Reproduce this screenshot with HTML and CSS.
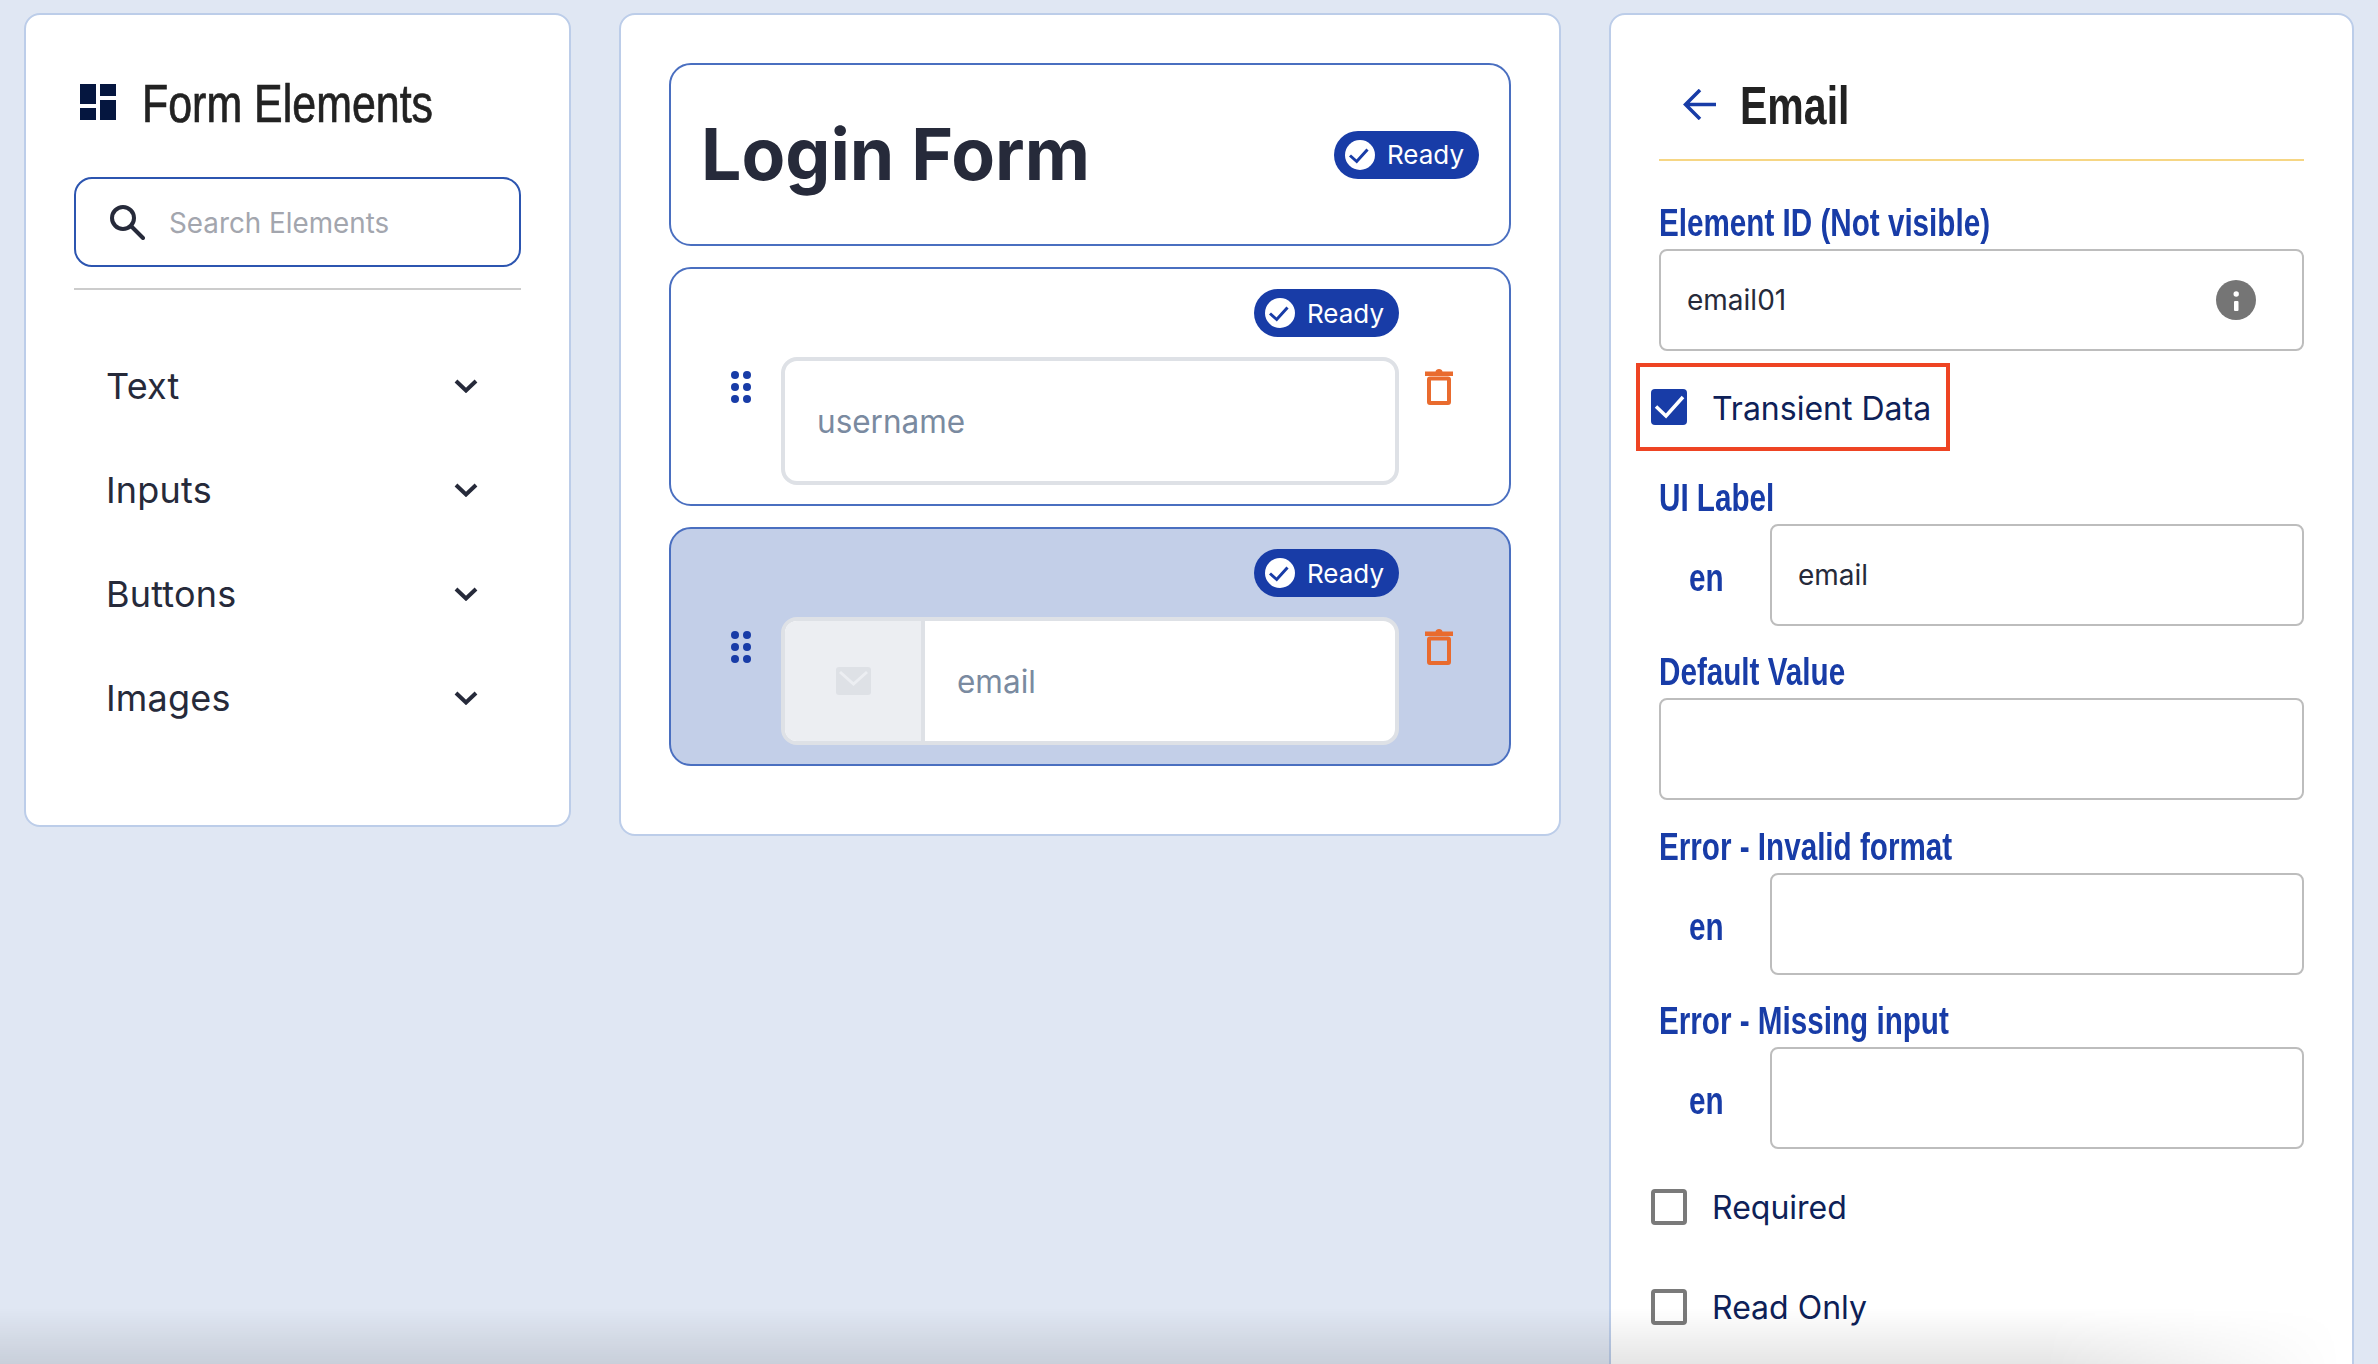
FILE: index.html
```html
<!DOCTYPE html>
<html lang="en">
<head>
<meta charset="utf-8">
<title>Login Form</title>
<link rel="stylesheet" href="styles.css">
</head>
<body>
<main class="page">
  <aside class="panel panel-left">
    <header class="elements-head">
      <svg class="elements-icon" viewBox="0 0 36 36"><path d="M0 0h16v20H0zM0 24h16v12H0zM20 0h16v12H20zM20 16h16v20H20z"/></svg>
      <h2 class="elements-title">Form Elements</h2>
    </header>
    <div class="search">
      <svg class="search-icon" viewBox="0 0 35 35"><circle cx="13" cy="13" r="11"/><path d="M21 21L33 33"/></svg>
      <span class="search-text">Search Elements</span>
    </div>
    <hr class="search-rule">
    <ul class="groups">
      <li class="group"><span>Text</span><svg class="chevron" viewBox="0 0 24 14"><path d="M2 2L12 11.5L22 2"/></svg></li>
      <li class="group"><span>Inputs</span><svg class="chevron" viewBox="0 0 24 14"><path d="M2 2L12 11.5L22 2"/></svg></li>
      <li class="group"><span>Buttons</span><svg class="chevron" viewBox="0 0 24 14"><path d="M2 2L12 11.5L22 2"/></svg></li>
      <li class="group"><span>Images</span><svg class="chevron" viewBox="0 0 24 14"><path d="M2 2L12 11.5L22 2"/></svg></li>
    </ul>
  </aside>

  <section class="panel panel-mid">
    <header class="card form-head">
      <h1 class="form-title">Login Form</h1>
      <span class="badge"><svg class="badge-check" viewBox="0 0 30 30"><circle cx="15" cy="15" r="15"/><path d="M5 15.5L11.7 21.5L22.5 9.5"/></svg>Ready</span>
    </header>

    <article class="card item">
      <span class="badge item-badge"><svg class="badge-check" viewBox="0 0 30 30"><circle cx="15" cy="15" r="15"/><path d="M5 15.5L11.7 21.5L22.5 9.5"/></svg>Ready</span>
      <svg class="handle" viewBox="0 0 20 32"><circle cx="4" cy="4" r="4"/><circle cx="16" cy="4" r="4"/><circle cx="4" cy="16" r="4"/><circle cx="16" cy="16" r="4"/><circle cx="4" cy="28" r="4"/><circle cx="16" cy="28" r="4"/></svg>
      <div class="preview"><span class="preview-text">username</span></div>
      <svg class="trash" viewBox="0 0 28 36"><path class="trash-fill" d="M0 2.500h10.500Q11 0 14 0t3.500 2.500H28V7H0z"/><rect class="trash-body" x="4" y="9.500" width="20" height="24.500" rx="1"/></svg>
    </article>

    <article class="card item item-active">
      <span class="badge item-badge"><svg class="badge-check" viewBox="0 0 30 30"><circle cx="15" cy="15" r="15"/><path d="M5 15.5L11.7 21.5L22.5 9.500"/></svg>Ready</span>
      <svg class="handle" viewBox="0 0 20 32"><circle cx="4" cy="4" r="4"/><circle cx="16" cy="4" r="4"/><circle cx="4" cy="16" r="4"/><circle cx="16" cy="16" r="4"/><circle cx="4" cy="28" r="4"/><circle cx="16" cy="28" r="4"/></svg>
      <div class="preview">
        <span class="addon"><svg class="mail" viewBox="0 0 35 28"><rect width="35" height="28" rx="3"/><path d="M4 5L17.500 17L31 5"/></svg></span>
        <span class="preview-text">email</span>
      </div>
      <svg class="trash" viewBox="0 0 28 36"><path class="trash-fill" d="M0 2.500h10.500Q11 0 14 0t3.500 2.500H28V7H0z"/><rect class="trash-body" x="4" y="9.500" width="20" height="24.500" rx="1"/></svg>
    </article>
  </section>

  <aside class="panel panel-right">
    <header class="detail-head">
      <svg class="back" viewBox="0 0 33 31"><path d="M33 15.500H3M17 1L2.500 15.500L17 30"/></svg>
      <h2 class="detail-title">Email</h2>
    </header>

    <div class="field field-first">
      <label class="field-label">Element ID (Not visible)</label>
      <div class="box box-value"><span>email01</span>
        <svg class="info" viewBox="0 0 40 40"><circle cx="20" cy="20" r="20"/><rect x="18" y="21" width="4.500" height="10" rx="1"/><circle cx="20.200" cy="14" r="2.700"/></svg>
      </div>
    </div>

    <div class="check check-marked">
      <svg class="tick" viewBox="0 0 36 36"><rect width="36" height="36" rx="4"/><path d="M5 17.500L15 27L32 8"/></svg>
      <span class="check-text">Transient Data</span>
    </div>

    <div class="field">
      <label class="field-label">UI Label</label>
      <div class="lang-row"><span class="lang">en</span><div class="box box-value"><span>email</span></div></div>
    </div>
    <div class="field">
      <label class="field-label">Default Value</label>
      <div class="box"></div>
    </div>
    <div class="field">
      <label class="field-label">Error - Invalid format</label>
      <div class="lang-row"><span class="lang">en</span><div class="box"></div></div>
    </div>
    <div class="field">
      <label class="field-label">Error - Missing input</label>
      <div class="lang-row"><span class="lang">en</span><div class="box"></div></div>
    </div>

    <div class="check check-first"><span class="empty-box"></span><span>Required</span></div>
    <div class="check check-next"><span class="empty-box"></span><span>Read Only</span></div>
  </aside>
</main>
<div class="bottom-fade"></div>
</body>
</html>
```
FILE: styles.css
```css
* { box-sizing: border-box; }
html, body { margin: 0; height: 100%; overflow: hidden; }
body {
  background: #e0e7f3;
  font-family: Inter, "Liberation Sans", sans-serif;
  color: #262a3a;
  position: relative;
}
h1, h2, ul { margin: 0; padding: 0; }
ul { list-style: none; }

.page {
  display: flex;
  align-items: flex-start;
  gap: 48px;
  padding: 13px 0 0 24px;
}
.panel {
  background: #fff;
  border: 2px solid #bccde9;
  border-radius: 16px;
  flex: none;
}

/* left */
.panel-left { width: 547px; padding: 62px 48px 75px; }
.elements-head { display: flex; align-items: center; height: 50px; padding: 3px 0 0 6px; }
.elements-icon { width: 36px; height: 36px; margin-top: -3px; fill: #05163f; flex: none; }
.elements-title {
  font-family: "Liberation Sans", sans-serif;
  font-weight: 400; font-size: 53px; line-height: 50px; color: #222;
  margin-left: 26px; white-space: nowrap;
  -webkit-text-stroke: 0.7px #222;
  transform: scaleX(0.81); transform-origin: left center;
}
.search {
  margin-top: 50px; height: 90px;
  border: 2px solid #2c55b0; border-radius: 18px;
  display: flex; align-items: center; padding-left: 34px;
}
.search-icon { width: 35px; height: 35px; fill: none; stroke: #262a3a; stroke-width: 4; stroke-linecap: round; }
.search-text { margin-left: 24px; padding-top: 1px; font-size: 27.800px; color: #a3a6ae; }
.search-rule { margin: 21px 0 0; border: 0; height: 2px; background: #ccc; }
.groups { margin-top: 44px; }
.group {
  height: 104px; display: flex; align-items: center; justify-content: space-between;
  padding: 0 43px 0 32px; font-size: 36px; letter-spacing: 0.2px;
}
.chevron { width: 24px; height: 14px; fill: none; stroke: #262a3a; stroke-width: 4; }

/* middle */
.panel-mid { width: 942px; padding: 48px 48px 68px; display: flex; flex-direction: column; gap: 21px; }
.card { border: 2px solid #4a6fc0; border-radius: 22px; background: #fff; }
.form-head {
  height: 183px; display: flex; align-items: center; justify-content: space-between;
  padding: 0 30px 0 30px;
}
.form-title { font-size: 71.500px; font-weight: 700; line-height: 1; }
.badge {
  width: 145px; height: 48px; border-radius: 24px; background: #183ca7; color: #fff;
  display: inline-flex; align-items: center; padding-left: 11px; gap: 12px; font-size: 26px;
}
.badge-check { width: 30px; height: 30px; flex: none; }
.badge-check circle { fill: #fff; }
.badge-check path { fill: none; stroke: #183ca7; stroke-width: 3; }

.item {
  height: 239px;
  display: grid;
  grid-template-columns: 50px 618px 54px;
  grid-template-rows: 48px 128px;
  row-gap: 20px;
  align-content: start;
  padding: 20px 0 0 60px;
}
.item-active { background: #c3cfe8; }
.item-badge { grid-column: 2; grid-row: 1; justify-self: end; }
.handle { grid-column: 1; grid-row: 2; width: 20px; height: 32px; margin-top: 14px; fill: #183ca7; }
.preview {
  grid-column: 2; grid-row: 2;
  border: 4px solid #dee1e6; border-radius: 16px; background: #fff;
  display: flex; align-items: center; overflow: hidden;
}
.preview-text { padding-left: 32px; font-size: 31.500px; color: #7a8aa0; }
.addon {
  align-self: stretch; width: 140px; flex: none;
  background: #eceef2; border-right: 4px solid #dee1e6;
  display: flex; align-items: center; justify-content: center;
}
.mail { width: 35px; height: 28px; }
.mail rect { fill: #dee1e6; }
.mail path { fill: none; stroke: #eceef2; stroke-width: 3; }
.trash { grid-column: 3; grid-row: 2; width: 28px; height: 36px; margin: 12px 0 0 26px; }
.trash-fill { fill: #e96b2e; }
.trash-body { fill: none; stroke: #e96b2e; stroke-width: 4; }

/* right */
.panel-right { width: 745px; padding: 62px 48px 200px 48px; }
.detail-head {
  height: 84px; padding: 0 0 27px 24px;
  border-bottom: 2px solid #f6d684;
  display: flex; align-items: center;
}
.back { width: 33px; height: 31px; fill: none; stroke: #183ca7; stroke-width: 3.500; flex: none; }
.detail-title {
  font-family: "Liberation Sans", sans-serif;
  font-size: 54px; font-weight: 700; line-height: 57px; color: #222; margin: 2px 0 0 24px;
  transform: scaleX(0.76); transform-origin: left center;
}
.field { margin-top: 28.500px; }
.field-first { margin-top: 44px; }
.field-label {
  display: block; height: 44px; line-height: 36px;
  font-family: "Liberation Sans", sans-serif;
  font-size: 38px; font-weight: 700; color: #183ca7; white-space: nowrap;
  transform: scaleX(0.78); transform-origin: left center;
}
.box {
  height: 102px; flex: 1;
  border: 2px solid #bdbdbd; border-radius: 8px; background: #fff;
}
.box-value {
  display: flex; align-items: center; justify-content: space-between;
  padding: 0 46px 0 26px; font-size: 28px;
}
.info { width: 40px; height: 40px; }
.info circle:first-child { fill: #757575; }
.info rect, .info circle + rect + circle { fill: #fff; }
.lang-row { display: flex; align-items: center; }
.lang {
  width: 111px; padding: 7px 0 0 30px;
  font-family: "Liberation Sans", sans-serif;
  font-size: 38px; font-weight: 700; color: #183ca7;
  transform: scaleX(0.78); transform-origin: 30px center;
}
.check {
  display: flex; align-items: center; gap: 25px;
  font-size: 32px; color: #0e2158; height: 36px;
  margin-left: -8px;
}
.check-marked {
  width: 314px; height: 88px; margin: 12px 0 0 -23px;
  border: 4px solid #ee4423; padding-left: 11px;
}
.check-text { padding-top: 2px; }
.check-first { margin-top: 40px; }
.check-next { margin-top: 64px; }
.tick { width: 36px; height: 36px; flex: none; }
.tick rect { fill: #183ca7; }
.tick path { fill: none; stroke: #fff; stroke-width: 3.500; }
.empty-box { width: 36px; height: 36px; border: 4px solid #7a7a7a; border-radius: 4px; flex: none; }

.bottom-fade {
  position: absolute; left: 0; right: 0; bottom: 0; height: 56px;
  background: linear-gradient(to bottom, rgba(0,0,0,0), rgba(0,0,0,.1));
  -webkit-mask-image: linear-gradient(to right, #000 86%, transparent 98.500%);
  mask-image: linear-gradient(to right, #000 86%, transparent 98.500%);
  pointer-events: none;
}
```
